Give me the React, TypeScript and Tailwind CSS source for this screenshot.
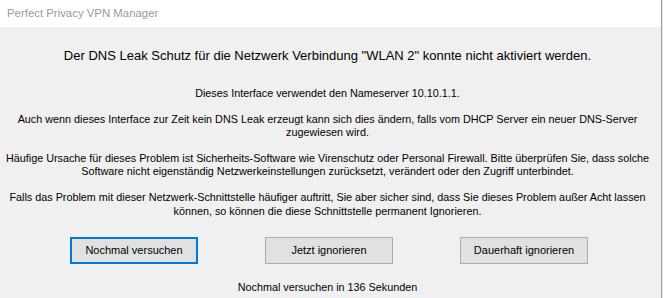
import React from "react";

const btnBase =
  "h-[27px] w-[128px] flex items-center justify-center bg-[#e1e1e1] text-[11px] text-black";

export default function App() {
  return (
    <div className="flex w-[663px] h-[298px] bg-white overflow-hidden" style={{ fontFamily: '"Liberation Sans", Arial, sans-serif' }}>
      <div className="flex flex-col w-[661px] h-full">
        <div className="h-[27px] bg-white flex items-center pl-[7px] text-[11.4px] text-[#9a9a9a]">
          Perfect Privacy VPN Manager
        </div>
        <div className="flex-1 bg-[#f0f0f0] flex flex-col items-center text-black pr-[6px]">
          <div className="mt-[21px] text-[13px] leading-[15px] text-center">
            Der DNS Leak Schutz für die Netzwerk Verbindung "WLAN 2" konnte nicht aktiviert werden.
          </div>
          <div className="mt-[24px] text-[10.8px] leading-[13px] text-center">
            Dieses Interface verwendet den Nameserver 10.10.1.1.
          </div>
          <div className="mt-[13px] text-[10.8px] leading-[13px] text-center">
            Auch wenn dieses Interface zur Zeit kein DNS Leak erzeugt kann sich dies ändern, falls vom DHCP Server ein neuer DNS-Server
            <br />
            zugewiesen wird.
          </div>
          <div className="mt-[13px] text-[10.8px] leading-[13px] text-center">
            Häufige Ursache für dieses Problem ist Sicherheits-Software wie Virenschutz oder Personal Firewall. Bitte überprüfen Sie, dass solche
            <br />
            Software nicht eigenständig Netzwerkeinstellungen zurücksetzt, verändert oder den Zugriff unterbindet.
          </div>
          <div className="mt-[12px] text-[10.8px] leading-[14px] text-center">
            Falls das Problem mit dieser Netzwerk-Schnittstelle häufiger auftritt, Sie aber sicher sind, dass Sie dieses Problem außer Acht lassen
            <br />
            können, so können die diese Schnittstelle permanent Ignorieren.
          </div>
          <div className="mt-[19px] flex gap-[67px] self-start ml-[70px]">
            <div className={`${btnBase} border-2 border-[#0078d7]`}>Nochmal versuchen</div>
            <div className={`${btnBase} border border-[#adadad]`}>Jetzt ignorieren</div>
            <div className={`${btnBase} border border-[#adadad]`}>Dauerhaft ignorieren</div>
          </div>
          <div className="mt-[17px] text-[10.8px] leading-[13px] text-center">
            Nochmal versuchen in 136 Sekunden
          </div>
        </div>
      </div>
      <div className="w-[1px] h-full bg-[#9c9c9c]" />
      <div className="w-[1px] h-full bg-[#e6e6e6]" />
    </div>
  );
}
